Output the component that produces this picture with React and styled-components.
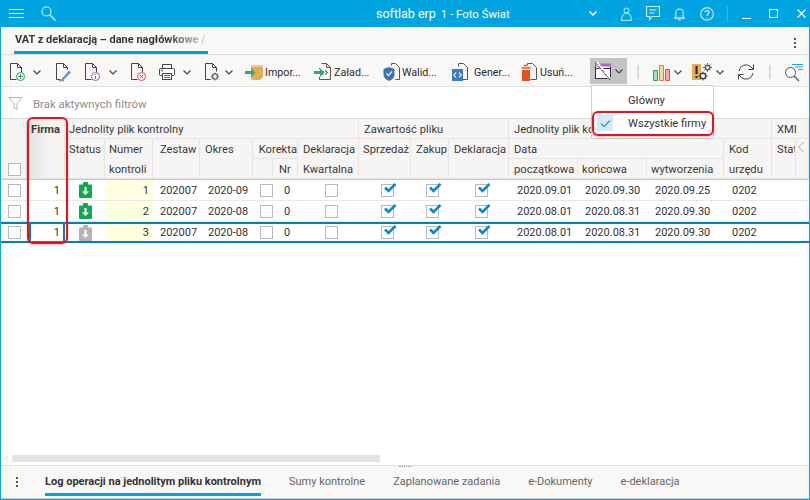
import React from 'react';
import styled, { createGlobalStyle, css } from 'styled-components';

const BLUE = '#00a4e0';
const ROW_BLUE = '#0083b3';
const RED = '#e8111d';
const COLUMNS = '26px 38px 40px 48px 47px 53px 20px 25px 61px 52px 38px 60px 69px 69px 77px 48px 24px 13px';

const GlobalStyle = createGlobalStyle`
  html, body { margin: 0; padding: 0; background: #fff; }
  body { font-family: Roboto, "Liberation Sans", sans-serif; color: #333; }
`;

const Window = styled.div`
  position: relative;
  box-sizing: border-box;
  width: 810px;
  height: 500px;
  display: flex;
  flex-direction: column;
  border: 1px solid ${BLUE};
  border-top: 0;
  overflow: hidden;
  background: #fff;
`;

const TitleBar = styled.header`
  height: 27px;
  margin: 0 -1px;
  flex: none;
  display: flex;
  align-items: center;
  background: ${BLUE};
  color: #fff;
  font-size: 12.5px;
`;

const TitleIcon = styled.svg`
  display: block;
  flex: none;
  margin-left: ${p => p.$ml || 0}px;
  fill: none;
  stroke: ${p => p.$stroke || '#d8f2fc'};
  stroke-width: 1.1;
`;

const AppName = styled.span`
  margin-left: ${p => p.$ml}px;
  font-size: ${p => p.$size}px;
  white-space: nowrap;
`;

const TitleRule = styled.i`
  width: 1px;
  height: 16px;
  margin-left: 13px;
  background: #35b6e6;
`;

const TabBar = styled.div`
  height: 27px;
  flex: none;
  display: flex;
  align-items: flex-end;
  justify-content: space-between;
  background: #f9f8f7;
  border-bottom: 1px solid #dfdfdf;
`;

const MainTab = styled.div`
  width: 194px;
  height: 24px;
  margin-left: 13px;
  box-sizing: border-box;
  padding: 3px 0 0 1px;
  border-bottom: 3px solid ${BLUE};
  font-size: 11px;
  font-weight: 700;
  white-space: nowrap;
  background: linear-gradient(90deg, #333 78%, #ddd 100%);
  background-clip: text;
  color: transparent;
`;

const Kebab = styled.div`
  display: flex;
  flex-direction: column;
  justify-content: ${p => (p.$center ? 'center' : 'flex-start')};
  gap: 2px;
  margin: 0 ${p => p.$mr || 0}px ${p => p.$mb || 0}px ${p => p.$ml || 0}px;
  & > i { width: 2px; height: 2px; background: #555; display: block; }
`;

const Toolbar = styled.div`
  height: 32px;
  flex: none;
  box-sizing: border-box;
  padding: 3px 0 0 7px;
  display: flex;
  align-items: stretch;
  background: #f9f8f7;
  border-bottom: 1px solid #dfdfdf;
`;

const ToolSlot = styled.div`
  width: ${p => p.$w}px;
  flex: none;
  box-sizing: border-box;
  display: flex;
  align-items: center;
  font-size: 10.7px;
  color: #2b2b2b;
  white-space: nowrap;
  ${p => p.$active && css`
    background: #c4c4c4;
    padding-left: 4px;
    margin-bottom: 2px;
  `}
`;

const ToolLabel = styled.span`
  margin-left: ${p => p.$ml}px;
`;

const Chevron = styled.svg`
  flex: none;
  margin-left: ${p => p.$ml}px;
  fill: none;
  stroke: #444;
  stroke-width: 1.2;
`;

const ToolRule = styled.i`
  width: 2px;
  height: 14px;
  margin-left: ${p => p.$ml}px;
  background: #dcdcdc;
`;

const FilterBar = styled.div`
  height: 32px;
  flex: none;
  box-sizing: border-box;
  padding: 2px 0 0 7px;
  display: flex;
  align-items: center;
  background: #fff;
  border-bottom: 1px solid #dcdcdc;
  font-size: 11.4px;
  color: #8d8d8d;
`;

const FilterText = styled.span`
  margin-left: 10px;
`;

const GridArea = styled.div`
  flex: 1;
  min-height: 0;
`;

const HeaderGrid = styled.div`
  display: grid;
  grid-template-columns: ${COLUMNS};
  grid-template-rows: repeat(3, 20px);
  background: #f6f5f3;
  border-bottom: 1px solid #c9c9c9;
`;

const HeadCell = styled.div`
  grid-column: ${p => p.$col};
  grid-row: ${p => p.$row};
  box-sizing: border-box;
  min-width: 0;
  padding: 1px ${p => p.$pr ?? 0}px 0 ${p => p.$pl ?? 4}px;
  border-right: 1px solid #e6e5e3;
  border-bottom: 1px solid #e6e5e3;
  font-size: 11.2px;
  line-height: 20px;
  color: #3a3a3a;
  white-space: nowrap;
  overflow: hidden;
  text-align: ${p => p.$align || 'left'};
  ${p => p.$bold && css`
    font-weight: 700;
    background: linear-gradient(90deg, #e2e1df 0%, #f6f5f3 65%);
  `}
  ${p => p.$end && css`
    display: flex;
    align-items: flex-end;
    justify-content: center;
    padding: 0 0 2px 1px;
  `}
`;

const Row = styled.div`
  display: grid;
  grid-template-columns: ${COLUMNS};
  height: 21px;
  box-sizing: border-box;
  align-items: stretch;
  border-bottom: 1px solid #e9e9e9;
  ${p => p.$selected && css`
    border-top: 2px solid ${ROW_BLUE};
    border-bottom: 2px solid ${ROW_BLUE};
  `}
`;

const Cell = styled.div`
  box-sizing: border-box;
  min-width: 0;
  display: flex;
  align-items: center;
  justify-content: ${p => p.$justify || 'flex-start'};
  padding: 0 ${p => p.$pr ?? 0}px 0 ${p => p.$pl ?? 0}px;
  font-size: 11px;
  color: #333;
  white-space: nowrap;
  ${p => p.$note && css`background: #ffffe2;`}
  ${p => p.$focus && css`
    margin-left: 2px;
    padding-right: 3px;
    border-left: 2px solid ${ROW_BLUE};
    border-right: 2px solid ${ROW_BLUE};
  `}
`;

const Box = styled.span`
  position: relative;
  display: block;
  flex: none;
  width: 11px;
  height: 11px;
  background: #fff;
  border: 1px solid #b9b9b9;
`;

const Tick = styled.svg`
  position: absolute;
  left: 1px;
  top: -3px;
  fill: none;
  stroke: #0a87d1;
  stroke-width: 2.6;
`;

const ScrollBar = styled.div`
  height: 7px;
  flex: none;
  margin-bottom: 3px;
  display: flex;
  align-items: stretch;
  background: #fff;
`;

const ScrollThumb = styled.div`
  width: 368px;
  margin-left: 2px;
  background: #e4e4e4;
`;

const BottomBar = styled.div`
  position: relative;
  height: 34px;
  flex: none;
  box-sizing: border-box;
  display: flex;
  align-items: stretch;
  background: #f9f8f7;
  border-top: 1px solid #dfdfdf;
  border-bottom: 1px solid #cfcfcf;
`;

const Grip = styled.span`
  position: absolute;
  left: 398px;
  top: 0;
  width: 12px;
  height: 1px;
  border-top: 1px dotted #999;
`;

const BottomTabs = styled.nav`
  display: flex;
  gap: 28px;
  margin-left: 27px;
`;

const BottomTab = styled.div`
  box-sizing: border-box;
  height: 30px;
  padding-top: 9px;
  font-size: 11px;
  white-space: nowrap;
  color: #666;
  ${p => p.$active && css`
    color: #333;
    font-weight: 700;
    border-bottom: 3px solid ${BLUE};
  `}
`;

const Menu = styled.div`
  position: absolute;
  left: 590px;
  top: 85px;
  width: 123px;
  height: 54px;
  box-sizing: border-box;
  background: #fff;
  border: 1px solid #cfcfcf;
  padding: 3px 5px;
  font-size: 11.2px;
  color: #333;
`;

const MenuItem = styled.div`
  height: 23px;
  display: flex;
  align-items: center;
  padding-left: 31px;
  position: relative;
  white-space: nowrap;
`;

const MenuCheck = styled.span`
  position: absolute;
  left: 0;
  top: 3px;
  width: 16px;
  height: 16px;
  display: flex;
  align-items: center;
  justify-content: center;
  background: #d6e9f5;
`;

const Marker = styled.div`
  position: absolute;
  left: ${p => p.$x}px;
  top: ${p => p.$y}px;
  width: ${p => p.$w}px;
  height: ${p => p.$h}px;
  box-sizing: border-box;
  border: 2px solid ${RED};
  border-radius: 6px;
  box-shadow: 0 1px 3px rgba(0, 0, 0, 0.25);
  pointer-events: none;
`;

const Ico = ({ w = 18, h = 20, children }) => (
  <svg width={w} height={h} viewBox={`0 0 ${w} ${h}`} style={{ display: 'block', flex: 'none' }}>
    {children}
  </svg>
);

const DocAdd = () => (
  <Ico>
    <path d="M2.5 17.5v-16h7l4 4v5M9.5 1.5v4h4M2.5 17.5h6" fill="none" stroke="#444" />
    <circle cx="12.5" cy="14.5" r="4" fill="#fff" stroke="#2aa45c" />
    <path d="M12.5 12v5M10 14.5h5" stroke="#2aa45c" />
  </Ico>
);

const DocEdit = () => (
  <Ico>
    <path d="M2.5 17.5v-16h7l4 4v2M9.5 1.5v4h4M2.5 17.5h4" fill="none" stroke="#444" />
    <path d="M7 17.5l8-9 2 2-8 8z" fill="#5b9ad6" />
    <path d="M5 18.5h5" stroke="#8a8a8a" strokeWidth="1.5" />
  </Ico>
);

const DocInfo = () => (
  <Ico>
    <path d="M2.5 17.5v-16h7l4 4v5M9.5 1.5v4h4M2.5 17.5h6" fill="none" stroke="#444" />
    <circle cx="12.5" cy="14.5" r="4" fill="#fff" stroke="#9a5cb4" />
    <path d="M12.5 14v3M12.5 12v1" stroke="#9a5cb4" />
  </Ico>
);

const DocRemove = () => (
  <Ico>
    <path d="M2.5 17.5v-16h7l4 4v5M9.5 1.5v4h4M2.5 17.5h6" fill="none" stroke="#444" />
    <circle cx="12.5" cy="14.5" r="4" fill="#fdecec" stroke="#e2545b" />
    <path d="M11 13l3 3M14 13l-3 3" stroke="#e2545b" />
  </Ico>
);

const Printer = () => (
  <Ico>
    <path d="M4.5 6.5v-4h9v4" fill="none" stroke="#444" />
    <rect x="1.5" y="6.5" width="15" height="7" rx="1" fill="#fff" stroke="#444" />
    <path d="M3 8.5h2" stroke="#2b8fd6" strokeWidth="1.4" />
    <rect x="4.5" y="11.5" width="9" height="6" fill="#fff" stroke="#444" />
    <path d="M6 13.5h6M6 15.5h6" stroke="#666" />
  </Ico>
);

const DocGear = () => (
  <Ico>
    <path d="M2.5 17.5v-16h7l4 4v4M9.5 1.5v4h4M2.5 17.5h5" fill="none" stroke="#444" />
    <circle cx="12" cy="14.5" r="2.6" fill="none" stroke="#666" strokeWidth="1.4" />
    <path d="M12 10.5v1.5M12 17v1.5M8 14.5h1.5M14.5 14.5H16M9.2 11.7l1 1M13.8 16.3l1 1M14.8 11.7l-1 1M10.2 16.3l-1 1" stroke="#666" />
  </Ico>
);

const GreenArrow = () => (
  <path d="M0 9h6V6l4.5 4.5L6 15v-3H0z" fill="#35a583" />
);

const ImportIco = () => (
  <Ico w={19}>
    <path d="M6 3h12v11c0 2-2 4-5 4H8l-2-1z" fill="#e8ab55" />
    <path d="M6 3h12v2H6z" fill="#f3c98e" />
    <GreenArrow />
  </Ico>
);

const LoadIco = () => (
  <Ico w={19}>
    <path d="M5.5 6V17.5h11V5.5l-4-4h-5M12.5 1.5v4h4" fill="none" stroke="#555" />
    <rect x="4" y="7" width="5" height="8" fill="#f9f8f7" />
    <GreenArrow />
    <path d="M11 8.5l2.5 2-2.5 2M9.5 9v.5M9.5 12v.5" fill="none" stroke="#333" />
  </Ico>
);

const ValidateIco = () => (
  <Ico w={17}>
    <path d="M8.5 3.5v-2h4l4 4v12h-4" fill="none" stroke="#555" />
    <path d="M0.5 7l5.5-2 5.5 2v5c0 4-3 6-5.500 7C3.500 18 .5 16 .5 12z" fill="#3e74b2" />
    <path d="M3.500 11.500l2 2 3.500-4" fill="none" stroke="#dff" strokeWidth="1.3" />
  </Ico>
);

const GenerateIco = () => (
  <Ico w={17}>
    <path d="M6.500 4.500v-3h5l4 4v12h-6" fill="none" stroke="#555" />
    <rect x="0" y="7" width="11" height="12" fill="#3f7cc0" />
    <path d="M4 10.500l-2 2.500 2 2.500M7 10.500l2 2.500-2 2.500" fill="none" stroke="#fff" strokeWidth="1.2" />
  </Ico>
);

const TrashIco = () => (
  <Ico w={17}>
    <path d="M6.500 3.500v-2h5l4 4v12h-6" fill="none" stroke="#555" />
    <path d="M3 3.500h3M0.500 6h9" stroke="#e2531c" strokeWidth="1.600" />
    <path d="M1 8h8v11H1z" fill="#e2531c" />
  </Ico>
);

const CalendarOff = () => (
  <Ico w={18} h={20}>
    <rect x="1.500" y="3.500" width="15" height="14" fill="#fff" stroke="#333" />
    <path d="M1 2.500h16v3H1z" fill="#a96cb8" />
    <path d="M1 7.500h16" stroke="#333" />
    <path d="M2 1l14 17" stroke="#f4f4f4" strokeWidth="3" />
    <path d="M1 1l15 18" stroke="#333" strokeDasharray="4 1" />
  </Ico>
);

const BarsIco = () => (
  <Ico w={19}>
    <path d="M1.500 8.500h4v10h-4z" fill="#a7e0bd" stroke="#25a65a" />
    <path d="M7.500 3.500h4v15h-4z" fill="#fbd79f" stroke="#ec7a2d" />
    <path d="M13.500 7.500h4v11h-4z" fill="#f7a9a9" stroke="#e84c4c" />
  </Ico>
);

const WarnGear = () => (
  <Ico w={21}>
    <path d="M0 2h9v16H0z" fill="#e2ad56" />
    <path d="M4.500 4v8M4.500 14v2" stroke="#222" strokeWidth="2" />
    <circle cx="15.500" cy="5.500" r="2.300" fill="none" stroke="#555" strokeWidth="1.500" />
    <path d="M15.500 1v1.500M15.500 8.500V10M11 5.500h1.500M18.500 5.500H20M12.500 2.500l1 1M17.500 7.500l1 1M18.500 2.500l-1 1M13.500 7.500l-1 1" stroke="#555" />
    <circle cx="11" cy="14" r="2.800" fill="none" stroke="#444" strokeWidth="1.500" />
    <path d="M11 9.500v1.500M11 17v1.500M6.500 14H8M14 14h1.500M8 11l1 1M13 16l1 1M14 11l-1 1M9 16l-1 1" stroke="#444" />
  </Ico>
);

const RefreshIco = () => (
  <Ico>
    <path d="M2 9a7 7 0 0 1 12-4l2 2M16 11a7 7 0 0 1-12 4l-2-2" fill="none" stroke="#444" />
    <path d="M16.500 2.500V7.500H11.500M1.500 17.500V12.500H6.500" fill="none" stroke="#444" />
  </Ico>
);

const FindIco = () => (
  <Ico w={21}>
    <circle cx="7.500" cy="10.500" r="5" fill="none" stroke="#555" />
    <path d="M11 14l5 5" stroke="#555" strokeWidth="1.300" />
    <path d="M9 2.500h11M12 5h8M15 7.500h5" stroke="#2aa5e5" />
  </Ico>
);

const ChevronDown = ({ ml }) => (
  <Chevron $ml={ml} width="8" height="5" viewBox="0 0 8 5">
    <path d="M0.500 0.500L4 4l3.500-3.500" />
  </Chevron>
);

const StatusIcon = ({ fill }) => (
  <Ico w={13} h={16}>
    <path d="M1 2.500h3V1q0-1 1-1h3q1 0 1 1v1.500h3q1 0 1 1V15q0 1-1 1H1q-1 0-1-1V3.500q0-1 1-1z" fill={fill} />
    <path d="M5.500 5h2v4.500h2.500l-3.500 3.500-3.500-3.500h2.500z" fill="#fff" />
  </Ico>
);

const FilterIcon = () => (
  <svg width="15" height="15" viewBox="0 0 15 15" fill="none" stroke="#b5b5b5">
    <path d="M1 1.500h13L9 7.500v6l-3-1.500V7.500z" />
  </svg>
);

const Check = () => (
  <Box>
    <Tick width="14" height="11" viewBox="0 0 14 11">
      <path d="M2 5.500l3.500 3.500 7-7" />
    </Tick>
  </Box>
);

const rows = [
  { no: 1, period: '2020-09', from: '2020.09.01', to: '2020.09.30', made: '2020.09.25', color: '#14a650' },
  { no: 2, period: '2020-08', from: '2020.08.01', to: '2020.08.31', made: '2020.09.30', color: '#14a650' },
  { no: 3, period: '2020-08', from: '2020.08.01', to: '2020.08.31', made: '2020.09.30', color: '#b4b4b4', selected: true },
];

export default function App() {
  return (
    <>
      <GlobalStyle />
      <Window>
        <TitleBar>
          <TitleIcon $ml={9} $stroke="#fff" width="15" height="10" viewBox="0 0 15 10">
            <path d="M0 .5h15M0 4.500h15M0 8.500h15" />
          </TitleIcon>
          <TitleIcon $ml={17} $stroke="#d8f2fc" width="15" height="15" viewBox="0 0 15 15">
            <circle cx="5.500" cy="5.500" r="4.500" />
            <path d="M9 9l5.500 5.500" strokeWidth="1.400" />
          </TitleIcon>
          <AppName $ml={320} $size={12.5}>softlab erp</AppName>
          <AppName $ml={5} $size={11.4}>1 - Foto Świat</AppName>
          <TitleIcon $ml={79} $stroke="#fff" width="8" height="5" viewBox="0 0 8 5">
            <path d="M0.500 0.500L4 4l3.500-3.500" strokeWidth="1.500" />
          </TitleIcon>
          <TitleIcon $ml={24} width="11" height="14" viewBox="0 0 13 16">
            <circle cx="6.500" cy="4" r="3" />
            <path d="M6.500 7C3 7 1 10 .5 15.500h12C12 10 10 7 6.500 7z" />
          </TitleIcon>
          <TitleIcon $ml={14} width="14" height="15" viewBox="0 0 14 15">
            <path d="M.5.500h13v10H6l-2.500 3v-3h-3z" />
            <path d="M3.500 4h7M3.500 7h5" />
          </TitleIcon>
          <TitleIcon $ml={14} width="11" height="14" viewBox="0 0 12 15">
            <path d="M2 11V6a4 4 0 0 1 8 0v5l1.500 1H.5z" />
            <path d="M4.500 14h3" />
          </TitleIcon>
          <TitleIcon $ml={15} width="14" height="14" viewBox="0 0 14 14">
            <circle cx="7" cy="7" r="6.300" />
            <path d="M5 5.500C5 3 9 3 9 5.500 9 7 7 7 7 9M7 10.500v1" />
          </TitleIcon>
          <TitleRule />
          <TitleIcon $ml={14} $stroke="#fff" width="9" height="10" viewBox="0 0 9 10">
            <path d="M0 9.500h9" />
          </TitleIcon>
          <TitleIcon $ml={18} $stroke="#fff" width="9" height="9" viewBox="0 0 9 9">
            <rect x=".5" y=".5" width="8" height="8" />
          </TitleIcon>
          <TitleIcon $ml={19} $stroke="#fff" width="9" height="9" viewBox="0 0 9 9">
            <path d="M.5.500l8 8M8.500.500l-8 8" />
          </TitleIcon>
        </TitleBar>

        <TabBar>
          <MainTab>VAT z deklaracją – dane nagłówkowe /</MainTab>
          <Kebab $mr={13} $mb={6}><i /><i /><i /></Kebab>
        </TabBar>

        <Toolbar>
          <ToolSlot $w={46}><DocAdd /><ChevronDown ml={7} /></ToolSlot>
          <ToolSlot $w={29}><DocEdit /></ToolSlot>
          <ToolSlot $w={46}><DocInfo /><ChevronDown ml={8} /></ToolSlot>
          <ToolSlot $w={29}><DocRemove /></ToolSlot>
          <ToolSlot $w={45}><Printer /><ChevronDown ml={7} /></ToolSlot>
          <ToolSlot $w={42}><DocGear /><ChevronDown ml={4} /></ToolSlot>
          <ToolSlot $w={69}><ImportIco /><ToolLabel $ml={1}>Impor...</ToolLabel></ToolSlot>
          <ToolSlot $w={69}><LoadIco /><ToolLabel $ml={1}>Załad...</ToolLabel></ToolSlot>
          <ToolSlot $w={69}><ValidateIco /><ToolLabel $ml={2}>Walid...</ToolLabel></ToolSlot>
          <ToolSlot $w={69}><GenerateIco /><ToolLabel $ml={5}>Gener...</ToolLabel></ToolSlot>
          <ToolSlot $w={69}><TrashIco /><ToolLabel $ml={2}>Usuń...</ToolLabel></ToolSlot>
          <ToolSlot $w={37} $active><CalendarOff /><ChevronDown ml={3} /></ToolSlot>
          <ToolSlot $w={25}><ToolRule $ml={10} /></ToolSlot>
          <ToolSlot $w={40}><BarsIco /><ChevronDown ml={3} /></ToolSlot>
          <ToolSlot $w={45}><WarnGear /><ChevronDown ml={3} /></ToolSlot>
          <ToolSlot $w={32}><RefreshIco /></ToolSlot>
          <ToolSlot $w={14}><ToolRule $ml={0} /></ToolSlot>
          <ToolSlot $w={22}><FindIco /></ToolSlot>
        </Toolbar>

        <FilterBar>
          <FilterIcon />
          <FilterText>Brak aktywnych filtrów</FilterText>
        </FilterBar>

        <GridArea>
          <HeaderGrid>
            <HeadCell $col="1" $row="1 / 4" $end><Box /></HeadCell>
            <HeadCell $col="2" $row="1 / 4" $bold $align="center" $pl={0}>Firma</HeadCell>
            <HeadCell $col="3 / 10" $row="1">Jednolity plik kontrolny</HeadCell>
            <HeadCell $col="3" $row="2 / 4">Status</HeadCell>
            <HeadCell $col="4" $row="2 / 4">Numer<br />kontroli</HeadCell>
            <HeadCell $col="5" $row="2 / 4" $pl={7}>Zestaw</HeadCell>
            <HeadCell $col="6" $row="2 / 4" $pl={5}>Okres</HeadCell>
            <HeadCell $col="7 / 9" $row="2" $align="right" $pl={0}>Korekta</HeadCell>
            <HeadCell $col="7" $row="3" />
            <HeadCell $col="8" $row="3" $pl={6}>Nr</HeadCell>
            <HeadCell $col="9" $row="2 / 4" $pl={5}>Deklaracja<br />Kwartalna</HeadCell>
            <HeadCell $col="10 / 13" $row="1" $pl={5}>Zawartość pliku</HeadCell>
            <HeadCell $col="10" $row="2 / 4">Sprzedaż</HeadCell>
            <HeadCell $col="11" $row="2 / 4" $pl={5}>Zakup</HeadCell>
            <HeadCell $col="12" $row="2 / 4" $pl={5}>Deklaracja</HeadCell>
            <HeadCell $col="13 / 17" $row="1" $pl={5}>Jednolity plik kontrolny</HeadCell>
            <HeadCell $col="13 / 16" $row="2" $pl={5}>Data</HeadCell>
            <HeadCell $col="13" $row="3" $pl={5}>początkowa</HeadCell>
            <HeadCell $col="14" $row="3" $pl={4}>końcowa</HeadCell>
            <HeadCell $col="15" $row="3" $pl={4}>wytworzenia</HeadCell>
            <HeadCell $col="16" $row="2 / 4" $pl={5}>Kod<br />urzędu</HeadCell>
            <HeadCell $col="17 / 19" $row="1" $pl={5}>XMI</HeadCell>
            <HeadCell $col="17" $row="2 / 4" $pl={5}>Status</HeadCell>
            <HeadCell $col="18" $row="2 / 4" $pl={1}>
              <svg width="8" height="12" viewBox="0 0 8 12" fill="none" stroke="#aaa"><path d="M6.500 1L1.500 6l5 5" /></svg>
            </HeadCell>
          </HeaderGrid>

          {rows.map(r => (
            <Row key={r.no} $selected={r.selected}>
              <Cell $justify="center" $pl={1}><Box /></Cell>
              <Cell $justify="flex-end" $pr={5} $focus={r.selected}>1</Cell>
              <Cell $justify="center"><StatusIcon fill={r.color} /></Cell>
              <Cell $justify="flex-end" $pr={4} $note>{r.no}</Cell>
              <Cell $pl={7}>202007</Cell>
              <Cell $pl={8}>{r.period}</Cell>
              <Cell $justify="flex-end"><Box /></Cell>
              <Cell $justify="center" $pl={3}>0</Cell>
              <Cell $justify="center" $pl={5}><Box /></Cell>
              <Cell $justify="center" $pl={4}><Check /></Cell>
              <Cell $justify="center" $pl={5}><Check /></Cell>
              <Cell $justify="center" $pl={5}><Check /></Cell>
              <Cell $pl={8}>{r.from}</Cell>
              <Cell $pl={7}>{r.to}</Cell>
              <Cell $pl={8}>{r.made}</Cell>
              <Cell $pl={8}>0202</Cell>
            </Row>
          ))}
        </GridArea>

        <ScrollBar>
          <svg width="7" height="7" viewBox="0 0 7 8" fill="none" stroke="#ccc" style={{ marginLeft: 2 }}>
            <path d="M5 1L2 4l3 3" />
          </svg>
          <ScrollThumb />
        </ScrollBar>

        <BottomBar>
          <Grip />
          <Kebab $ml={15} $center><i /><i /><i /></Kebab>
          <BottomTabs>
            <BottomTab $active>Log operacji na jednolitym pliku kontrolnym</BottomTab>
            <BottomTab>Sumy kontrolne</BottomTab>
            <BottomTab>Zaplanowane zadania</BottomTab>
            <BottomTab>e-Dokumenty</BottomTab>
            <BottomTab>e-deklaracja</BottomTab>
          </BottomTabs>
        </BottomBar>

        <Menu>
          <MenuItem>Główny</MenuItem>
          <MenuItem>
            <MenuCheck>
              <svg width="11" height="9" viewBox="0 0 11 9" fill="none" stroke="#2aa5e5" strokeWidth="1.500">
                <path d="M1 4.500l3 3 6-6" />
              </svg>
            </MenuCheck>
            Wszystkie firmy
          </MenuItem>
        </Menu>
        <Marker $x={26} $y={117} $w={41} $h={127} />
        <Marker $x={591} $y={111} $w={122} $h={25} />
      </Window>
    </>
  );
}
